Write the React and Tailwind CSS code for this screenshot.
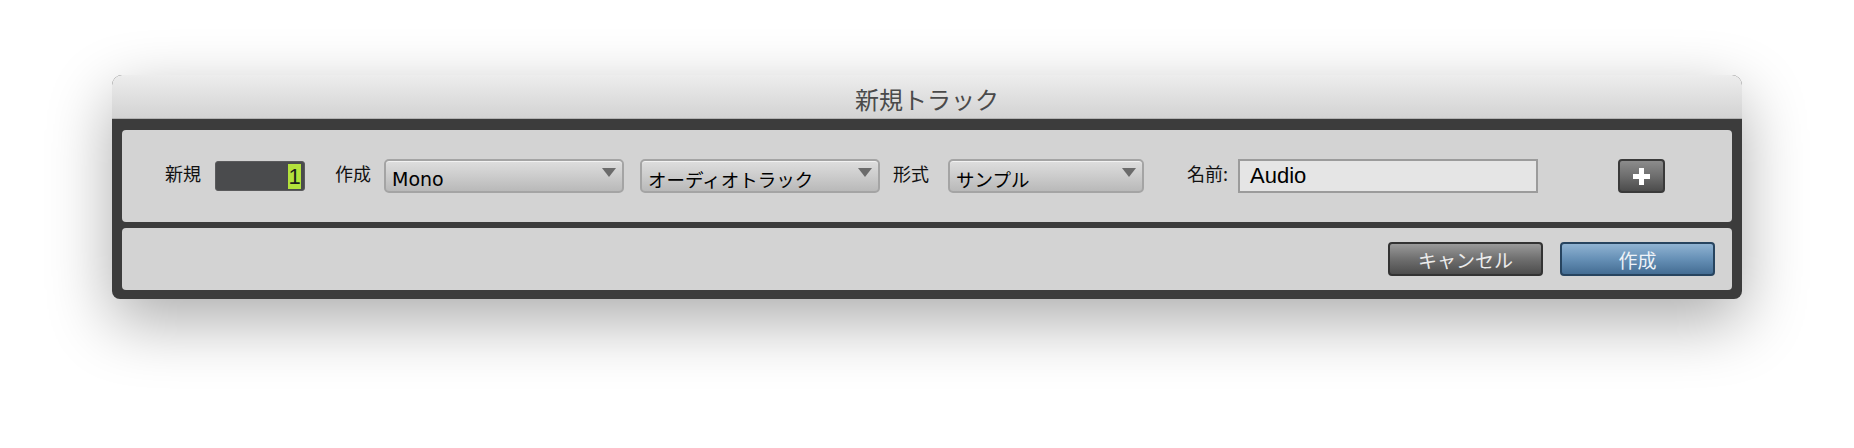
import React from 'react';

const JP = { fontFamily: '"Noto Sans CJK JP", "Noto Sans", sans-serif' };
const LATIN = { fontFamily: '"Liberation Sans", "Noto Sans CJK JP", sans-serif' };

function Arrow() {
  return (
    <svg width="14" height="9" viewBox="0 0 14 9" className="shrink-0 mt-[7px] mr-[6px]">
      <path d="M0 0 L14 0 L7 9 Z" fill="#6b6b6b" />
    </svg>
  );
}

function Select({ label, width, latin }) {
  return (
    <div
      className={`${width} h-[34px] flex items-start justify-between rounded-[5px] border-2 border-[#a4a4a4] bg-gradient-to-b from-[#dedede] via-[#cccccc] to-[#b9b9b9] shadow-[inset_0_1px_0_rgba(255,255,255,0.6)]`}
    >
      <span
        className={`pl-[6px] mt-[3px] leading-[30px] text-black ${latin ? 'text-[19px]' : 'text-[18.5px]'}`}
        style={latin ? { fontFamily: '"DejaVu Sans", sans-serif' } : JP}
      >
        {label}
      </span>
      <Arrow />
    </div>
  );
}

function Label({ children, className = '' }) {
  return (
    <span className={`text-[18px] text-[#111] leading-none -mt-[6px] ${className}`} style={JP}>
      {children}
    </span>
  );
}

export default function App() {
  return (
    <div className="w-full h-[448px] bg-white pt-[75px] pl-[112px] overflow-hidden">
      <div className="w-[1630px] h-[224px] rounded-t-[10px] rounded-b-[8px] bg-[#3c3c3c] shadow-[0_22px_65px_rgba(0,0,0,0.33)] flex flex-col overflow-hidden">
        {/* title bar */}
        <div className="h-[44px] bg-gradient-to-b from-[#ededed] to-[#d3d3d3] border-b border-[#b2b2b2] flex items-center justify-center">
          <span className="text-[24px] text-[#4a4a4a] mt-[4px]" style={JP}>新規トラック</span>
        </div>

        <div className="flex-1 px-[10px] pt-[11px] pb-[9px] flex flex-col gap-[6px]">
          {/* controls */}
          <div className="h-[92px] rounded-[4px] bg-[#d3d3d3] flex items-center pl-[43px]">
            <Label>新規</Label>
            <div className="ml-[14px] w-[90px] h-[30px] rounded-[3px] bg-[#4a4b4d] border border-[#5a5a5c] flex items-center justify-end pr-[3px]">
              <span className="w-[13px] h-[25px] bg-[#b3e23c] text-[#1d1d1d] text-[22px] leading-[25px] text-center" style={LATIN}>1</span>
            </div>
            <Label className="ml-[30px]">作成</Label>
            <div className="ml-[13px]">
              <Select label="Mono" width="w-[240px]" latin />
            </div>
            <div className="ml-[16px]">
              <Select label="オーディオトラック" width="w-[240px]" />
            </div>
            <Label className="ml-[13px]">形式</Label>
            <div className="ml-[19px]">
              <Select label="サンプル" width="w-[196px]" />
            </div>
            <Label className="ml-[43px]">名前:</Label>
            <div className="ml-[10px] w-[300px] h-[34px] border-2 border-[#9b9b9b] bg-[#e5e5e5] flex items-center pl-[10px]">
              <span className="text-[22px] text-black leading-none" style={LATIN}>Audio</span>
            </div>
            <button className="ml-[80px] w-[47px] h-[34px] rounded-[4px] border-2 border-[#3a3a3a] bg-gradient-to-b from-[#8c8c8c] via-[#6e6e6e] to-[#4c4c4c] flex items-center justify-center">
              <svg width="17" height="17" viewBox="0 0 17 17">
                <rect x="6" y="0" width="5" height="17" fill="#ffffff" />
                <rect x="0" y="6" width="17" height="5" fill="#ffffff" />
              </svg>
            </button>
          </div>

          {/* actions */}
          <div className="flex-1 rounded-[4px] bg-[#d3d3d3] flex items-center justify-end gap-[17px] pr-[17px]">
            <button className="w-[155px] h-[34px] rounded-[4px] border-2 border-[#333333] bg-gradient-to-b from-[#9a9a9a] via-[#6f6f6f] to-[#4d4d4d] text-[19px] text-[#ececec] leading-none" style={JP}>
              キャンセル
            </button>
            <button className="w-[155px] h-[34px] rounded-[4px] border-2 border-[#27445f] bg-gradient-to-b from-[#90b3d2] via-[#6690b6] to-[#446d93] text-[19px] text-[#eef3f8] leading-none" style={JP}>
              作成
            </button>
          </div>
        </div>
      </div>
    </div>
  );
}
